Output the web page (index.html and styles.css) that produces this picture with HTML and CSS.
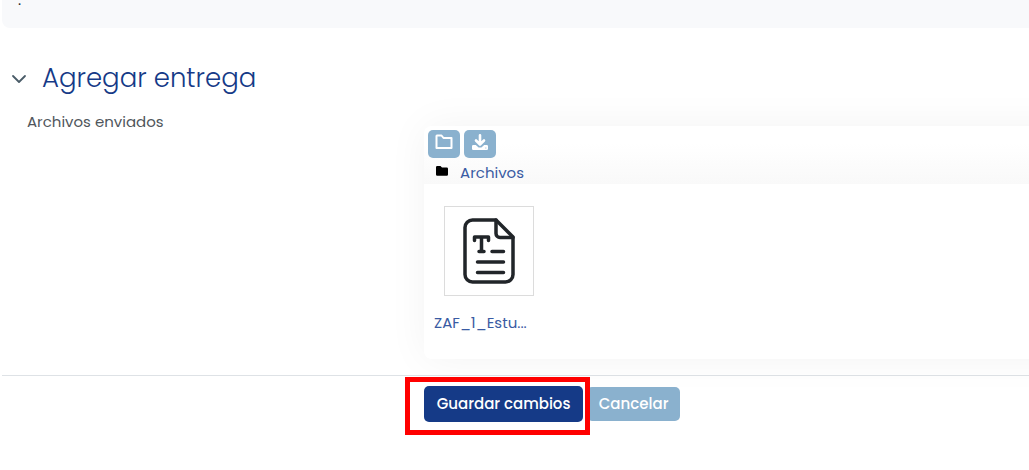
FILE: index.html
```html
<!DOCTYPE html>
<html lang="es">
<head>
  <meta charset="UTF-8">
  <meta name="viewport" content="width=device-width, initial-scale=1.0">
  <title>Agregar entrega</title>
  <link rel="stylesheet" href="styles.css">
</head>
<body>

  <!-- Activity description -->
  <div class="description">
    <p>.</p>
  </div>

  <form class="submission-form">
    <!-- Section header -->
    <div class="section-header">
      <button type="button" class="toggle" aria-label="Contraer">
        <svg width="16" height="16" viewBox="0 0 16 16" fill="none" stroke="#4a5c68" stroke-width="1.800" stroke-linecap="round" stroke-linejoin="round">
          <path d="M2 6l6 6 6-6"/>
        </svg>
      </button>
      <h3>Agregar entrega</h3>
    </div>

    <!-- File manager -->
    <div class="form-row">
      <div class="form-label">Archivos enviados</div>
      <div class="file-manager">
        <div class="toolbar">
          <div class="tools">
            <button type="button" class="tool-btn" aria-label="Crear carpeta">
              <svg width="18" height="16" viewBox="0 0 18 16" fill="none" stroke="#fff" stroke-width="2" stroke-linejoin="round">
                <path d="M2 1.500h4.500l2 2.500h8v10h-15V2z"/>
              </svg>
            </button>
            <button type="button" class="tool-btn" aria-label="Descargar">
              <svg width="18" height="16" viewBox="0 0 18 16" fill="none" stroke="#fff" stroke-width="2.600" stroke-linecap="round" stroke-linejoin="round">
                <path d="M9 1.300v8M5 6.500l4 4 4-4"/>
                <path d="M2.300 11h2.500l2.800 2.500h2.800l2.800-2.500h2.500a1.300 1.300 0 0 1 1.300 1.300v2.400a1.300 1.300 0 0 1-1.300 1.300H2.300A1.300 1.300 0 0 1 1 14.700v-2.400a1.300 1.300 0 0 1 1.300-1.300z" fill="#fff" stroke="none"/>
                <path d="M14.800 14h.1" stroke="#8ab1ce" stroke-width="1"/>
              </svg>
            </button>
          </div>
          <div class="path">
            <svg width="12" height="10" viewBox="0 0 12 10" fill="#000">
              <path d="M1.200 0h3.300L6 1.500h4.800A1.200 1.200 0 0 1 12 2.700v5.800a1.200 1.200 0 0 1-1.200 1.200H1.200A1.200 1.200 0 0 1 0 8.500V1.200A1.200 1.200 0 0 1 1.200 0z"/>
            </svg>
            <a href="#">Archivos</a>
          </div>
        </div>
        <div class="files">
          <a href="#" class="file">
            <span class="thumbnail">
              <svg width="52" height="66" viewBox="0 0 52 66" fill="none" stroke="#212529" stroke-width="3.500" stroke-linecap="round" stroke-linejoin="round">
                <path d="M33 2H9.500A7.500 7.500 0 0 0 2 9.500v47A7.500 7.500 0 0 0 9.500 64h33a7.500 7.500 0 0 0 7.500-7.500V19z"/>
                <path d="M33 2v13.500a4 4 0 0 0 4 4h13"/>
                <path d="M11.500 22.500v-3.500h14v3.500M18.500 19v14.500M16 33.500h5M29 33.500h11.500M14.500 44h26M14.500 54.500h26"/>
              </svg>
            </span>
            <span class="file-name">ZAF_1_Estu...</span>
          </a>
        </div>
      </div>
    </div>

    <!-- Actions -->
    <div class="actions">
      <div class="highlight">
        <button type="submit" class="btn btn-primary">Guardar cambios</button>
      </div>
      <button type="button" class="btn btn-secondary">Cancelar</button>
    </div>
  </form>

</body>
</html>
```
FILE: styles.css
```css
* {
  margin: 0;
  padding: 0;
  box-sizing: border-box;
}
body {
  font-family: Poppins, Inter, sans-serif;
  font-size: 15px;
  font-weight: 400;
  line-height: 22px;
  color: #50565c;
  background-color: #fff;
  padding: 0 0 32px 2px;
  overflow-x: clip;
}
button {
  font-family: inherit;
  border: none;
  cursor: pointer;
}
a {
  color: #3a5ba3;
  text-decoration: none;
}
.description {
  display: flex;
  height: 28px;
  padding-left: 16px;
  color: #212529;
  background-color: #f8f9fb;
  border-radius: 0 0 0 8px;
}
.description p {
  margin-top: -11px;
}
.section-header {
  display: flex;
  align-items: center;
  gap: 15px;
  padding: 32px 0 0 9px;
}
.toggle {
  display: flex;
  background: none;
}
h3 {
  font-size: 26px;
  font-weight: 300;
  line-height: 36px;
  color: #153a87;
}
.form-row {
  display: flex;
  padding: 15px 0 16px;
}
.form-label {
  flex: 0 0 41.1%;
  padding-left: 25px;
}
/* Runs past the right edge so only the left side shows its shadow */
.file-manager {
  flex: 1;
  margin: 15px -40px 0 0;
  background-color: #fff;
  border-radius: 8px;
  box-shadow: 0 0 40px rgba(0, 0, 0, 0.05);
}
.toolbar {
  height: 58px;
  padding: 4px;
  background: linear-gradient(#fff 30%, #f9f9f9);
  border-radius: 8px 8px 0 0;
}
.tools {
  display: flex;
  gap: 4px;
}
.tool-btn {
  display: flex;
  justify-content: center;
  width: 32px;
  height: 28px;
  padding-top: 4px;
  background-color: #8ab1ce;
  border-radius: 5px;
}
.path {
  display: flex;
  align-items: center;
  gap: 12px;
  padding: 4px 0 0 8px;
}
.path svg {
  margin-bottom: 4px;
}
.files {
  height: 175px;
  padding: 22px 10px;
  background-color: #fff;
  border-radius: 0 0 8px 8px;
}
.file {
  display: flex;
  flex-direction: column;
  gap: 16px;
  width: 110px;
}
.thumbnail {
  display: flex;
  align-items: center;
  justify-content: center;
  align-self: center;
  width: 90px;
  height: 90px;
  border: 1px solid #dcdcdc;
}
.actions {
  display: flex;
  align-items: center;
  padding: 10px 0 0 41.1%;
  border-top: 1px solid #dee2e6;
}
.highlight {
  position: relative;
}
/* Red frame over the save button */
.highlight::after {
  content: "";
  position: absolute;
  top: -9px;
  right: -7px;
  bottom: -13px;
  left: -19px;
  border: 5px solid #f00;
  pointer-events: none;
}
.btn {
  display: block;
  padding-bottom: 2px;
  font-size: 15px;
  font-weight: 500;
  color: #fff;
  border-radius: 5px;
}
.btn-primary {
  min-width: 159px;
  height: 36px;
  background-color: #153a87;
}
.btn-secondary {
  min-width: 93px;
  height: 34px;
  margin-left: 4px;
  background-color: #8ab1ce;
}
```
